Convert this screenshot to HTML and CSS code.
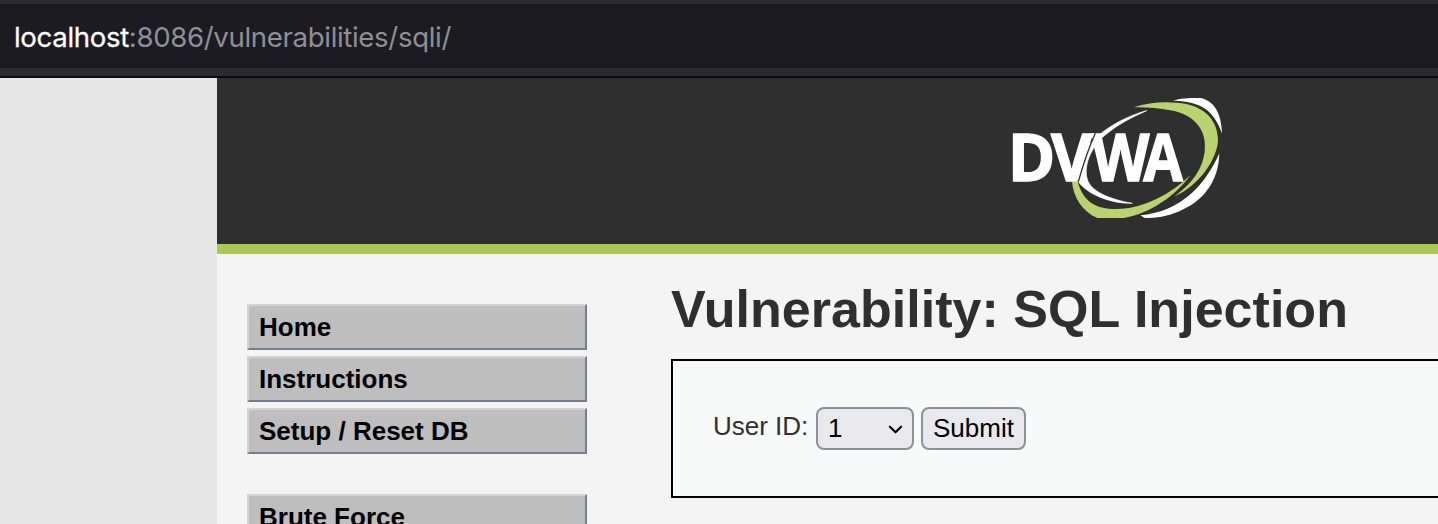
FILE: index.html
```html
<!DOCTYPE html>
<html lang="en">
<head>
<meta charset="utf-8">
<title>Vulnerability: SQL Injection</title>
<link rel="stylesheet" href="styles.css">
</head>
<body>
<div class="toolbar"><div class="url"><span class="host">localhost</span>:8086/vulnerabilities/sqli/</div></div>
<div class="page">
  <div class="container">
    <header class="header">
      <svg class="logo" width="240" height="145" viewBox="0 0 720 435">
        <path fill="#fff" stroke="#fff" stroke-width="2" d="M440 77C365 97 286 145 250 202C226 242 221 273 235 290C262 327 330 356 397 355C324 342 272 318 262 283C248 236 281 175 322 145C356 117 396 96 440 77Z"/>
        <path fill="#fff" d="M520 47C540 40 560 39 602 39C640 47 665 82 666 146C650 99 626 72 594 60C570 50 545 47 520 47Z"/>
        <path fill="#fff" d="M658 205C656 290 610 350 535 380C500 394 470 399 434 399L421 391C475 387 532 365 578 322C612 290 638 250 658 205Z"/>
        <path fill="#bad36c" d="M401 67C455 48 515 49 559 57C618 70 655 110 654 168C650 222 600 300 524 334C580 291 608 250 614 200C622 132 580 88 511 76C477 70 438 66 401 67Z"/>
        <path fill="#bad36c" d="M216 290C220 335 245 378 292 399H371C450 386 530 330 571 270C518 324 430 372 350 372C284 372 250 348 233 290Z"/>
        <g class="logo-text">
          <text x="23" y="288" textLength="143" lengthAdjust="spacingAndGlyphs">D</text>
          <text x="153" y="288" textLength="124" lengthAdjust="spacingAndGlyphs">V</text>
          <text x="275" y="288" textLength="173" lengthAdjust="spacingAndGlyphs">W</text>
          <text x="430" y="288" textLength="119" lengthAdjust="spacingAndGlyphs">A</text>
        </g>
        <path class="logo-slit" d="M286 145C268 185 252 230 235 290"/>
      </svg>
    </header>
    <div class="body">
      <nav class="menu">
        <ul class="group"><li>Home</li><li>Instructions</li><li>Setup / Reset DB</li></ul>
        <ul class="group"><li>Brute Force</li></ul>
      </nav>
      <main class="main">
        <h1>Vulnerability: SQL Injection</h1>
        <form class="panel">
          <label class="label" for="uid">User ID:</label>
          <button class="control select" id="uid" type="button">1<svg class="chevron" width="16" height="10" viewBox="0 0 16 10"><path d="M2 2.5L8 8.5L14 2.5"/></svg></button>
          <button class="control submit" type="button">Submit</button>
        </form>
      </main>
    </div>
  </div>
</div>
</body>
</html>
```
FILE: styles.css
```css
* { box-sizing: border-box; }
body { margin: 0; height: 524px; overflow: hidden; font-family: "Liberation Sans", Arial, sans-serif; font-size: 26px; color: #2f2f2f; background: #e7e7e7; }
.toolbar { height: 78px; padding-top: 4px; background: #2b2a33; border-bottom: 2px solid #0c0c0d; }
.url { height: 64px; padding-left: 14px; background: #1c1b22; color: #8f8f94; font: 27.6px/66px Inter, sans-serif; letter-spacing: -0.34px; white-space: nowrap; }
.host { color: #fbfbfe; -webkit-text-stroke: 0.3px #fbfbfe; }
.page { padding-left: 217px; height: 446px; }
.container { height: 446px; background: #f4f4f4; overflow: hidden; }
.header { height: 176px; padding: 7px 0 0 783px; background: #2f2f2f; border-bottom: 10px solid #a9ca52; }
.logo { display: block; filter: blur(0.5px); }
.logo-text { font: bold 197px "Open Sans", sans-serif; fill: #fff; stroke: #fff; stroke-width: 4; }
.logo-slit { fill: none; stroke: #2f2f2f; stroke-width: 4; }
.body { display: flex; gap: 84px; padding-left: 30px; }
.menu { flex: 0 0 340px; padding-top: 50px; }
.group { list-style: none; margin: 0 0 40px; padding: 0; display: flex; flex-direction: column; gap: 6px; }
.group li { height: 46px; padding-left: 10px; border: 2px solid; border-color: #d3d3d3 #708090 #708090 #d3d3d3; background: #bebebe; color: #000; font-weight: bold; line-height: 42px; }
.main { flex: 1; min-width: 0; }
h1 { margin: 0; height: 105px; padding-top: 25px; font-size: 52px; line-height: 60px; letter-spacing: 0.03px; white-space: nowrap; }
.panel { width: 900px; height: 139px; padding: 46px 0 0 40px; display: flex; align-items: flex-start; background: #f8faf9; border: 2px solid #000; }
.label { width: 103px; line-height: 38px; white-space: nowrap; }
.control { height: 43px; padding: 0 10px 1px; border: 2px solid #8f8f9d; border-radius: 8px; background: #e9e9ed; color: #000; font: 26px/38px "Liberation Sans", Arial, sans-serif; }
.select { width: 98px; margin-right: 7px; display: flex; align-items: center; justify-content: space-between; padding-right: 9px; }
.submit { width: 105px; }
.chevron { width: 15px; margin-top: 2px; fill: none; stroke: #000; stroke-width: 2.3; stroke-linecap: round; stroke-linejoin: round; }
```
